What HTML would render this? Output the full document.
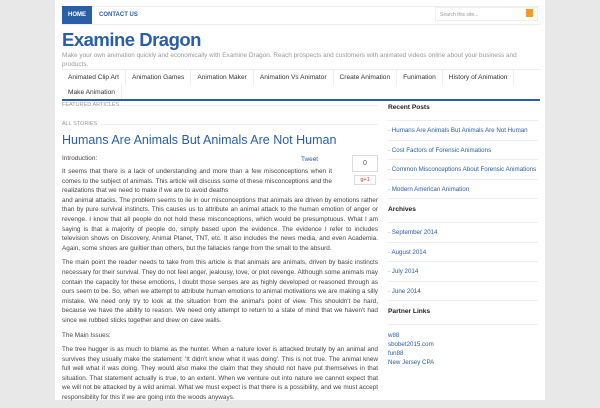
<!DOCTYPE html>
<html><head><meta charset="utf-8"><style>
*{margin:0;padding:0;box-sizing:border-box}
body{width:600px;height:400px;overflow:hidden;background:#e8e8e8;font-family:"Liberation Sans",sans-serif;position:relative}
#w{position:absolute;left:55px;top:0;width:490px;height:400px;background:#fff}
.a{position:absolute;white-space:nowrap}
.nav{left:62px;top:6px;width:478px;height:19px;border-top:1px solid #eee;border-bottom:1px solid #eee}
.home{left:62px;top:6px;width:30px;height:18px;background:#2a5fa8;color:#fff;font-size:6px;font-weight:bold;line-height:18px;text-align:center}
.menu{display:flex;flex-wrap:wrap}
.menu span{display:block;font-size:6.6px;color:#333;padding:0 6px;border-right:1px solid #eee;height:15px;line-height:15px}
p{font-size:6.4px;color:#444;line-height:9.6px;text-align:justify;margin-bottom:5px}
.sb{left:388px;width:150px;font-size:6.2px}
.sb h4{font-size:6.6px;color:#222;height:19px;line-height:12px;border-bottom:1px solid #eee;margin-bottom:0}
.sb li{list-style:none;color:#2a5fa8;height:19.5px;line-height:19.5px;border-bottom:1px solid #eee;white-space:nowrap;overflow:hidden}
.sb li:before{content:"- ";color:#999}
</style></head><body>
<div id="w"></div>
<div class="a nav"></div>
<div class="a home">HOME</div>
<div class="a" style="left:99px;top:12px;font-size:6px;font-weight:bold;color:#2a5fa8">CONTACT US</div>
<div class="a" style="left:435px;top:7px;width:103px;height:14px;border:1px solid #eee;font-size:5px;color:#999;padding:4px 4px">Search this site...</div>
<div class="a" style="left:526px;top:9px;width:7px;height:8px;background:#f39a2e"></div>
<div class="a" style="left:62px;top:29px;font-size:18.5px;font-weight:bold;color:#2a5fa8;letter-spacing:-0.5px">Examine Dragon</div>
<div class="a" style="left:62px;top:52px;width:478px;white-space:normal;font-size:6.4px;color:#999;line-height:8.5px">Make your own animation quickly and economically with Examine Dragon. Reach prospects and customers with animated videos online about your business and products.</div>
<div class="a menu" style="left:62px;top:69px;width:478px;white-space:normal;border-top:1px solid #eee"><span>Animated Clip Art</span><span>Animation Games</span><span>Animation Maker</span><span>Animation Vs Animator</span><span>Create Animation</span><span>Funimation</span><span>History of Animation</span><span>Make Animation</span></div>
<div class="a" style="left:62px;top:99px;width:478px;height:2px;background:#2a5fa8"></div>
<div class="a" style="left:62px;top:102px;font-size:5.5px;color:#999">FEATURED ARTICLES</div>
<div class="a" style="left:120px;top:105px;width:258px;height:1px;background:#eee"></div>
<div class="a" style="left:62px;top:121px;font-size:5.5px;color:#999">ALL STORIES</div>
<div class="a" style="left:100px;top:124px;width:278px;height:1px;background:#eee"></div>
<div class="a" style="left:62px;top:133px;font-size:12.5px;color:#2a5fa8">Humans Are Animals But Animals Are Not Human</div>
<div class="a" style="left:62px;top:155px;font-size:6.4px;color:#444">Introduction:</div>
<div class="a" style="left:301px;top:156px;font-size:6.4px;color:#2a5fa8">Tweet</div>
<div class="a" style="left:352px;top:155px;width:26px;height:17px;border:1px solid #ddd;font-size:7px;color:#555;text-align:center;line-height:15px">0</div>
<div class="a" style="left:354px;top:175px;width:22px;height:10px;border:1px solid #ddd;font-size:5.5px;color:#d33;text-align:center;line-height:8px">g+1</div>
<div class="a" style="left:62px;top:167px;width:316px;white-space:normal">
<p style="width:270px;margin-bottom:0">It seems that there is a lack of understanding and more than a few misconceptions when it comes to the subject of animals. This article will discuss some of these misconceptions and the realizations that we need to make if we are to avoid deaths</p>
<p>and animal attacks. The problem seems to lie in our misconceptions that animals are driven by emotions rather than by pure survival instincts. This causes us to attribute an animal attack to the human emotion of anger or revenge. I know that all people do not hold these misconceptions, which would be presumptuous. What I am saying is that a majority of people do, simply based upon the evidence. The evidence I refer to includes television shows on Discovery, Animal Planet, TNT, etc. It also includes the news media, and even Academia. Again, some shows are guiltier than others, but the fallacies range from the small to the absurd.</p>
<p>The main point the reader needs to take from this article is that animals are animals, driven by basic instincts necessary for their survival. They do not feel anger, jealousy, love, or plot revenge. Although some animals may contain the capacity for these emotions, I doubt those senses are as highly developed or reasoned through as ours seem to be. So, when we attempt to attribute human emotions to animal motivations we are making a silly mistake. We need only try to look at the situation from the animal's point of view. This shouldn't be hard, because we have the ability to reason. We need only attempt to return to a state of mind that we haven't had since we rubbed sticks together and drew on cave walls.</p>
<p>The Main Issues:</p>
<p>The tree hugger is as much to blame as the hunter. When a nature lover is attacked brutally by an animal and survives they usually make the statement; 'It didn't know what it was doing'. This is not true. The animal knew full well what it was doing. They would also make the claim that they should not have put themselves in that situation. That statement actually is true, to an extent. When we venture out into nature we cannot expect that we will not be attacked by a wild animal. What we must expect is that there is a possibility, and we must accept responsibility for this if we are going into the woods anyways.</p>
</div>
<div class="a sb" style="top:102px;white-space:normal">
<h4>Recent Posts</h4>
<ul><li>Humans Are Animals But Animals Are Not Human</li><li>Cost Factors of Forensic Animations</li><li>Common Misconceptions About Forensic Animations</li><li>Modern American Animation</li></ul>
<h4 style="margin-top:5px">Archives</h4>
<ul><li>September 2014</li><li>August 2014</li><li>July 2014</li><li>June 2014</li></ul>
<h4 style="margin-top:5px">Partner Links</h4>
<div style="color:#2a5fa8;line-height:9px;margin-top:6px">w88<br>sbobet2015.com<br>fun88<br>New Jersey CPA</div>
</div>
</body></html>
